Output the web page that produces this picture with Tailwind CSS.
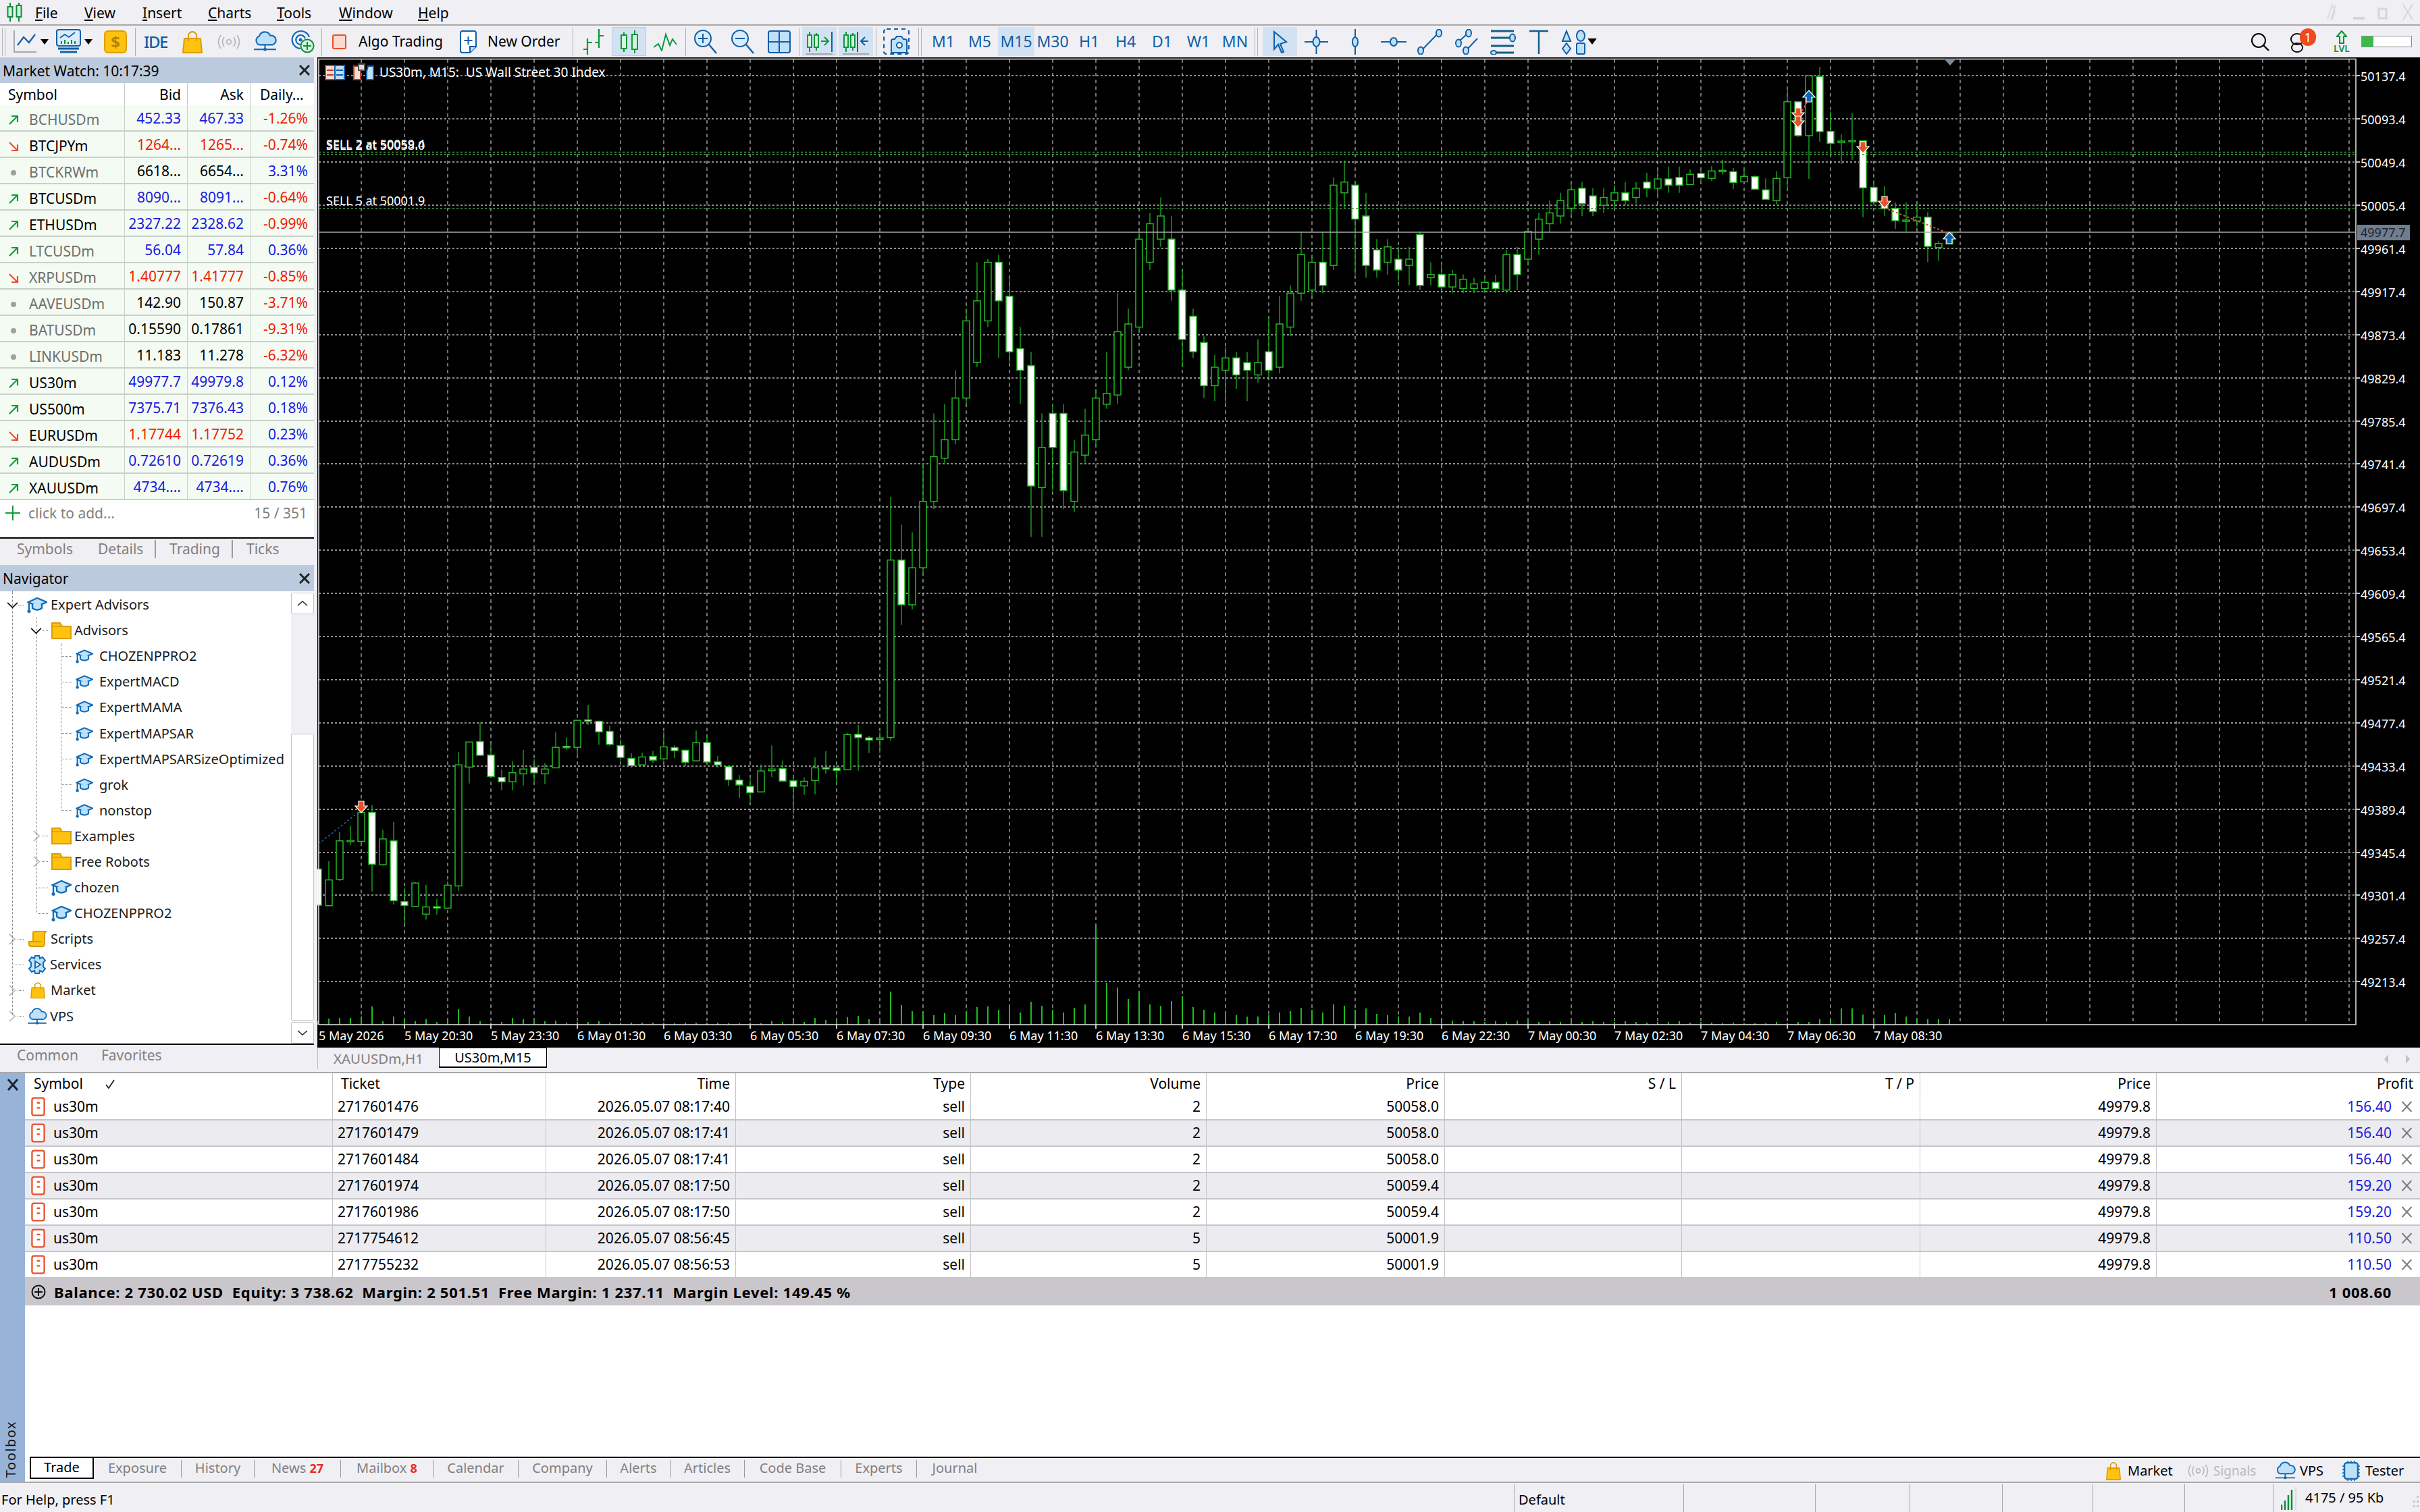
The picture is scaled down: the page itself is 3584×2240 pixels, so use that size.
<!DOCTYPE html>
<html lang="en">
<head>
<meta charset="UTF-8" />
<title>MetaTrader 5</title>
<script src="https://cdn.jsdelivr.net/npm/@tailwindcss/browser@4"></script>
</head>
<body class="w-[3584px] h-[2240px] overflow-hidden flex flex-col bg-[#f0eff3] text-[21px] text-black [font-family:'Noto_Sans',sans-serif]">

<svg class="absolute w-0 h-0">
  <defs>
    <symbol id="cap" viewBox="0 0 30 24"><path d="M2 8 15 2l14 6-14 6z" fill="#bfe0f9" stroke="#0f6cb8" stroke-width="2.400"/><path d="M8 11v6q7 5 14 0v-6" fill="#bfe0f9" stroke="#0f6cb8" stroke-width="2.400"/><path d="M3 9v12" stroke="#0f6cb8" stroke-width="2.400"/><circle cx="3" cy="21.500" r="2.500" fill="#0f6cb8"/></symbol>
    <symbol id="folder" viewBox="0 0 30 25"><path d="M1 24V1h12l3 5h13v18z" fill="#ffc20e" stroke="#dc9c00" stroke-width="2"/><path d="M1 6h15" stroke="#dc9c00" stroke-width="1.500"/></symbol>
    <symbol id="open" viewBox="0 0 18 12"><path d="M1 2l8 8 8-8" fill="none" stroke="#000" stroke-width="1.800"/></symbol>
    <symbol id="shut" viewBox="0 0 12 18"><path d="M1 1l9 8-9 8" fill="none" stroke="#b4b4b4" stroke-width="1.800"/></symbol>
    <symbol id="up" viewBox="0 0 16 16"><path d="M2 14 14 2M5 2h9v9" fill="none" stroke="#129a3e" stroke-width="2.200"/></symbol>
    <symbol id="down" viewBox="0 0 16 16"><path d="M2 2l12 12M14 5v9H5" fill="none" stroke="#e9503c" stroke-width="2.200"/></symbol>
    <symbol id="dot" viewBox="0 0 16 16"><circle cx="8" cy="8" r="4" fill="#a0a0a0"/></symbol>
    <symbol id="sell" viewBox="0 0 22 30"><rect x="1.500" y="1.500" width="19" height="27" rx="3" fill="#fff" stroke="#e8502a" stroke-width="2.400"/><path d="M9 9h5M9 17h5" stroke="#e8502a" stroke-width="2.400"/></symbol>
    <symbol id="cross" viewBox="0 0 16 16"><path d="M1.500 1 14.500 15M14.500 1 1.500 15" stroke="#808080" stroke-width="2"/></symbol>
    <symbol id="bag" viewBox="0 0 30 34"><path d="M3 12h24l2 21H1z" fill="#ffc20e" stroke="#dc9c00" stroke-width="2"/><path d="M9 16V6q6-8 12 0v10" fill="none" stroke="#dc9c00" stroke-width="2"/></symbol>
    <symbol id="cloud" viewBox="0 0 36 32"><path d="M9 21a7 7 0 0 1 0-13 9 9 0 0 1 17-1 7 7 0 0 1 3 14z" fill="#bfe0f9" stroke="#0f6cb8" stroke-width="2.200"/><path d="M18 21v7M1 28h34" stroke="#0f6cb8" stroke-width="2.200"/><circle cx="18" cy="28" r="2.500" fill="#0f6cb8"/></symbol>
    <symbol id="signal" viewBox="0 0 34 22"><circle cx="17" cy="11" r="3.400" fill="none" stroke="#b9b9b9" stroke-width="1.800"/><path d="M10 4q-5 7 0 14M24 4q5 7 0 14M5 1q-7 10 0 20M29 1q7 10 0 20" fill="none" stroke="#b9b9b9" stroke-width="1.800"/></symbol>
    <symbol id="tri" viewBox="0 0 12 8"><path d="M0 0h12L6 8z"/></symbol>
  </defs>
</svg>

<!-- menu -->
<div class="h-[38px] flex items-center border-b-2 border-[#a9a9a9] shrink-0 relative [&>span]:mt-[3px]">
  <svg class="ml-[10px] w-[23px] h-[28px]" viewBox="0 0 23 28"><path d="M5 0v28M18 0v28" stroke="#0a8f3c" stroke-width="2"/><rect x="1.500" y="6" width="7" height="15" fill="#d6f5dc" stroke="#0a8f3c" stroke-width="2"/><rect x="14.500" y="4" width="7" height="17" fill="#d6f5dc" stroke="#0a8f3c" stroke-width="2"/></svg>
  <span class="ml-[19px] w-[73px]"><u>F</u>ile</span>
  <span class="w-[86px]"><u>V</u>iew</span>
  <span class="w-[97px]"><u>I</u>nsert</span>
  <span class="w-[102px]"><u>C</u>harts</span>
  <span class="w-[92px]"><u>T</u>ools</span>
  <span class="w-[117px]"><u>W</u>indow</span>
  <span><u>H</u>elp</span>
  <svg class="ml-auto mr-[9px] w-[130px] h-[26px]" viewBox="0 0 130 26"><path d="M2 24 9 2l4 10-4 12M14 2 7 24" fill="none" stroke="#dcdcde" stroke-width="2"/><path d="M40 20h17v4H40z" fill="#d6d6d8"/><path d="M78 8h11v14H78z" fill="none" stroke="#d6d6d8" stroke-width="3"/><path d="M114 2l14 22M128 2l-14 22" stroke="#d6d6d8" stroke-width="2"/></svg>
</div>

<!-- toolbar -->
<div class="h-[47px] flex items-center shrink-0">
  <div class="ml-[3px] w-[5px] h-[42px] border-x border-[#b4b4b4]"></div>
  <svg class="ml-[12px] w-[35px] h-[33px]" viewBox="0 0 35 33"><path d="M1 0v32h33" fill="none" stroke="#a8a8a8" stroke-width="2"/><path d="M6 22 15 10l8 8 9-12" fill="none" stroke="#0f5fa8" stroke-width="2.200"/></svg>
  <svg class="ml-[5px] w-[12px] h-[8px]"><use href="#tri"/></svg>
  <svg class="ml-[11px] w-[37px] h-[37px]" viewBox="0 0 37 37"><rect x="1" y="1" width="35" height="24" rx="3" fill="#d8ecfb" stroke="#0f5fa8" stroke-width="2"/><path d="M6 13l7-5 6 4 9-7" fill="none" stroke="#0f5fa8" stroke-width="1.800"/><path d="M8 22v-4M13 22v-6M18 22v-3M23 22v-6M28 22v-4" stroke="#0a8f3c" stroke-width="2"/><path d="M3 29h31M6 34h25" stroke="#0f5fa8" stroke-width="3"/></svg>
  <svg class="ml-[5px] w-[12px] h-[8px]"><use href="#tri"/></svg>
  <div class="ml-[17px] w-[34px] h-[34px] rounded-[6px] bg-[#ffc20e] border-2 border-[#e09e00] text-center text-[#b8820a] font-bold text-[24px] leading-[30px]">$</div>
  <div class="ml-[12px] w-px h-[42px] bg-[#b0b0b0]"></div>
  <div class="ml-[12px] w-[35px] text-[#0f5fa8] font-medium text-[24px] tracking-[-1.500px]">IDE</div>
  <svg class="ml-[22px] w-[30px] h-[34px]"><use href="#bag"/></svg>
  <svg class="ml-[22px] w-[34px] h-[22px]"><use href="#signal"/></svg>
  <svg class="ml-[19px] w-[35px] h-[31px]"><use href="#cloud"/></svg>
  <svg class="ml-[20px] w-[36px] h-[35px]" viewBox="0 0 36 35"><path d="M15 28a13 13 0 1 1 13-17M15 22a7 7 0 1 1 7-9" fill="none" stroke="#0f6cb8" stroke-width="2.200"/><circle cx="15" cy="15" r="2.500" fill="#0f6cb8"/><circle cx="25" cy="24" r="9.500" fill="#d6f5dc" stroke="#0a8f3c" stroke-width="2"/><path d="M25 18v12M19 24h12" stroke="#0a8f3c" stroke-width="2"/></svg>
  <div class="ml-[10px] w-px h-[42px] bg-[#b0b0b0]"></div>
  <div class="ml-[15px] w-[21px] h-[22px] rounded-[3px] bg-[#fbd9cf] border-2 border-[#e8502a]"></div>
  <span class="ml-[18px] w-[123px] whitespace-nowrap">Algo Trading</span>
  <svg class="ml-[27px] w-[25px] h-[34px]" viewBox="0 0 25 34"><path d="M4 1h17q3 0 3 3v20l-9 9H4q-3 0-3-3V4q0-3 3-3z" fill="#fff" stroke="#0f5fa8" stroke-width="2"/><path d="M12.500 9v12M6.500 15h12" stroke="#0f5fa8" stroke-width="2"/><path d="M15 33v-9h9" fill="#bfe0f9" stroke="#0f5fa8" stroke-width="2"/></svg>
  <span class="ml-[16px] w-[106px] whitespace-nowrap">New Order</span>
  <div class="ml-[20px] w-px h-[42px] bg-[#b0b0b0]"></div>
  <svg class="ml-[12px] w-[34px] h-[38px]" viewBox="0 0 34 38"><path d="M9 14v24M3 30h6M9 20h7M26 0v28M20 20h6M26 10h7" fill="none" stroke="#0a9a3c" stroke-width="2.200"/></svg>
  <div class="ml-[11px] w-[51px] h-[43px] flex items-center justify-center bg-[#d3e2f2] border border-[#bccde0]">
    <svg class="w-[28px] h-[34px]" viewBox="0 0 28 34"><path d="M6 3v29M22 0v34" stroke="#0a9a3c" stroke-width="2"/><rect x="2" y="7" width="8" height="20" fill="#d6f5dc" stroke="#0a9a3c" stroke-width="2"/><rect x="18" y="6" width="8" height="22" fill="#d6f5dc" stroke="#0a9a3c" stroke-width="2"/></svg>
  </div>
  <svg class="ml-[11px] w-[35px] h-[28px]" viewBox="0 0 35 28"><path d="M0 22l7-5 5 10 6-24 6 16 4-9 6 8" fill="none" stroke="#0a9a3c" stroke-width="2"/></svg>
  <div class="ml-[12px] w-px h-[42px] bg-[#b0b0b0]"></div>
  <svg class="ml-[12px] w-[34px] h-[36px]" viewBox="0 0 34 36"><circle cx="13" cy="13" r="12" fill="#d8ecfb" stroke="#0f5fa8" stroke-width="2"/><path d="M13 6v14M6 13h14" stroke="#0f5fa8" stroke-width="2"/><path d="M22 22l11 13" stroke="#0f5fa8" stroke-width="2.400"/></svg>
  <svg class="ml-[21px] w-[34px] h-[36px]" viewBox="0 0 34 36"><circle cx="13" cy="13" r="12" fill="#d8ecfb" stroke="#0f5fa8" stroke-width="2"/><path d="M6 13h14" stroke="#0f5fa8" stroke-width="2"/><path d="M22 22l11 13" stroke="#0f5fa8" stroke-width="2.400"/></svg>
  <svg class="ml-[20px] w-[34px] h-[34px]" viewBox="0 0 34 34"><rect x="1" y="1" width="32" height="32" rx="3" fill="#bfe0f9" stroke="#0f5fa8" stroke-width="2"/><path d="M17 1v32M1 17h32" stroke="#0f5fa8" stroke-width="2"/></svg>
  <div class="ml-[12px] w-px h-[42px] bg-[#b0b0b0]"></div>
  <div class="ml-[4px] w-[51px] h-[43px] flex items-center justify-center bg-[#d3e2f2] relative">
    <svg class="w-[38px] h-[30px]" viewBox="0 0 38 30"><path d="M4 0v30M14 2v26" stroke="#0a9a3c" stroke-width="2"/><rect x="1" y="5" width="6" height="18" fill="#d6f5dc" stroke="#0a9a3c" stroke-width="2"/><rect x="11" y="5" width="6" height="18" fill="#d6f5dc" stroke="#0a9a3c" stroke-width="2"/><path d="M21 14h10M26 8l6 6-6 6" fill="none" stroke="#0a9a3c" stroke-width="2"/><path d="M37 0v30" stroke="#0f5fa8" stroke-width="2"/></svg>
    <div class="absolute left-[6px] right-[6px] bottom-[2px] h-[2px] bg-[#a4a8ae]"></div>
  </div>
  <div class="ml-[3px] w-[51px] h-[43px] flex items-center justify-center bg-[#d3e2f2] relative">
    <svg class="w-[38px] h-[30px]" viewBox="0 0 38 30"><path d="M4 0v30M14 2v26" stroke="#0a9a3c" stroke-width="2"/><rect x="1" y="5" width="6" height="18" fill="#d6f5dc" stroke="#0a9a3c" stroke-width="2"/><rect x="11" y="5" width="6" height="18" fill="#d6f5dc" stroke="#0a9a3c" stroke-width="2"/><path d="M21 0v30" stroke="#0f5fa8" stroke-width="2"/><path d="M37 14H27M32 8l-6 6 6 6" fill="none" stroke="#0f5fa8" stroke-width="2"/></svg>
    <div class="absolute left-[6px] right-[6px] bottom-[2px] h-[2px] bg-[#a4a8ae]"></div>
  </div>
  <div class="ml-[4px] w-px h-[42px] bg-[#b0b0b0]"></div>
  <svg class="ml-[10px] w-[39px] h-[39px]" viewBox="0 0 39 39"><rect x="1" y="1" width="37" height="37" rx="4" fill="none" stroke="#0f5fa8" stroke-width="2.200" stroke-dasharray="6 5"/><path d="M12 36V19q0-3 3-3h2l3-4h7l3 4h2q3 0 3 3v17z" fill="#bfe0f9" stroke="#0f5fa8" stroke-width="2"/><circle cx="24" cy="25" r="4" fill="#fff" stroke="#0f5fa8" stroke-width="2"/></svg>
  <div class="ml-[13px] w-[5px] h-[42px] border-x border-[#b4b4b4]"></div>
  <div class="ml-[5px] flex text-[#0f5fa8] text-[23px] text-center leading-[43px] [&>span]:w-[54px]">
    <span>M1</span><span>M5</span><span class="bg-[#d3e2f2]">M15</span><span>M30</span><span>H1</span><span>H4</span><span>D1</span><span>W1</span><span>MN</span>
  </div>
  <div class="ml-[2px] w-[5px] h-[42px] border-x border-[#b4b4b4]"></div>
  <div class="ml-[7px] w-[51px] h-[43px] flex items-center justify-center bg-[#d3e2f2]">
    <svg class="w-[22px] h-[34px]" viewBox="0 0 22 34"><path d="M2 2l18 15-9 3 5 12-3 1-5-12-6 7z" fill="#bfe0f9" stroke="#0f5fa8" stroke-width="2"/></svg>
  </div>
  <svg class="ml-[11px] w-[35px] h-[36px]" viewBox="0 0 35 36"><path d="M17.500 0v36M0 18h35" stroke="#0f5fa8" stroke-width="2"/><ellipse cx="17.500" cy="18" rx="5" ry="7" fill="#bfe0f9" stroke="#0f5fa8" stroke-width="2"/></svg>
  <svg class="ml-[34px] w-[12px] h-[38px]" viewBox="0 0 12 38"><path d="M6 0v38" stroke="#0f5fa8" stroke-width="2"/><ellipse cx="6" cy="19" rx="4" ry="7" fill="#bfe0f9" stroke="#0f5fa8" stroke-width="2"/></svg>
  <svg class="ml-[32px] w-[38px] h-[14px]" viewBox="0 0 38 14"><path d="M0 7h38" stroke="#0f5fa8" stroke-width="2"/><ellipse cx="19" cy="7" rx="5" ry="6" fill="#bfe0f9" stroke="#0f5fa8" stroke-width="2"/></svg>
  <svg class="ml-[16px] w-[37px] h-[38px]" viewBox="0 0 37 38"><path d="M6 32 31 6" stroke="#0f5fa8" stroke-width="2"/><ellipse cx="5" cy="32" rx="4" ry="5.500" fill="#bfe0f9" stroke="#0f5fa8" stroke-width="2"/><ellipse cx="32" cy="6" rx="4" ry="5.500" fill="#bfe0f9" stroke="#0f5fa8" stroke-width="2"/></svg>
  <svg class="ml-[19px] w-[37px] h-[38px]" viewBox="0 0 37 38"><path d="M4 20 19 6M16 32 33 14" stroke="#0f5fa8" stroke-width="2"/><ellipse cx="5" cy="21" rx="4" ry="5.500" fill="#bfe0f9" stroke="#0f5fa8" stroke-width="2"/><ellipse cx="20" cy="6" rx="4" ry="5.500" fill="#bfe0f9" stroke="#0f5fa8" stroke-width="2"/><ellipse cx="16" cy="32" rx="4" ry="5.500" fill="#bfe0f9" stroke="#0f5fa8" stroke-width="2"/></svg>
  <svg class="ml-[14px] w-[40px] h-[38px]" viewBox="0 0 40 38"><path d="M2 3h34M2 13h34M2 25h34M2 35h34" stroke="#0f6088" stroke-width="3" /><ellipse cx="34" cy="13" rx="4" ry="5.500" fill="#bfe0f9" stroke="#0f5fa8" stroke-width="2"/><ellipse cx="6" cy="35" rx="4" ry="3" fill="#bfe0f9" stroke="#0f5fa8" stroke-width="2"/></svg>
  <svg class="ml-[19px] w-[28px] h-[36px]" viewBox="0 0 28 36"><path d="M0 2h28M14 2v34" stroke="#0f6088" stroke-width="2.400"/></svg>
  <svg class="ml-[20px] w-[36px] h-[38px]" viewBox="0 0 36 38"><path d="M7 3l6 15H1z" fill="#bfe0f9" stroke="#0f5fa8" stroke-width="2"/><ellipse cx="28" cy="10" rx="6" ry="8" fill="#bfe0f9" stroke="#0f5fa8" stroke-width="2"/><path d="M7 21l6 8-6 8-6-8z" fill="#bfe0f9" stroke="#0f5fa8" stroke-width="2"/><rect x="22" y="21" width="12" height="16" rx="2" fill="#bfe0f9" stroke="#0f5fa8" stroke-width="2"/></svg>
  <svg class="ml-[2px] w-[14px] h-[9px]"><use href="#tri"/></svg>

  <svg class="ml-auto w-[27px] h-[26px]" viewBox="0 0 27 26"><ellipse cx="11" cy="11" rx="10" ry="10" fill="none" stroke="#000" stroke-width="2"/><path d="M18 18l8 8" stroke="#000" stroke-width="2.400"/></svg>
  <div class="ml-[27px] w-[42px] h-[32px] relative">
    <svg class="w-[28px] h-[30px] mt-[2px]" viewBox="0 0 28 30"><path d="M14 2a9 8 0 1 0 .1 0M14 16a8 6.500 0 1 0 .1 0" fill="none" stroke="#111" stroke-width="2"/></svg>
    <div class="absolute right-0 -top-[4px] w-[24px] h-[26px] rounded-full bg-[#ef4a1f] text-white text-[18px] text-center leading-[26px]">1</div>
  </div>
  <div class="ml-[25px] w-[26px] flex flex-col items-center">
    <svg class="w-[16px] h-[20px]" viewBox="0 0 16 20"><path d="M8 1 1 9h4v10h6V9h4z" fill="#d6f5dc" stroke="#0a8f3c" stroke-width="2"/></svg>
    <span class="text-[#0a8f3c] text-[14px] leading-[13px] font-semibold">LVL</span>
  </div>
  <div class="ml-[16px] mr-[12px] w-[75px] h-[17px] border border-[#8e8e8e] bg-white"><div class="w-[17px] h-full bg-[#3cb94a]"></div></div>
</div>

<!-- main -->
<div class="h-[1503px] flex shrink-0">
  <div class="w-[470px] shrink-0">
    <div class="w-[465px]">
      <div class="h-[38px] bg-[#bccadd] flex items-center justify-between px-[4px]">
        <span class="mt-[4px]">Market Watch: 10:17:39</span>
        <svg class="mr-[2px] w-[16px] h-[16px]" viewBox="0 0 16 16"><path d="M1 1l14 14M15 1 1 15" stroke="#222" stroke-width="3"/></svg>
      </div>
      <div class="h-[33px] bg-white grid grid-cols-[185px_93px_93px_94px] leading-[35px] [&>span]:border-r [&>span]:border-[#c8c8c8] [&>span]:text-right [&>span]:pr-[9px]">
        <span class="!text-left pl-[12px]">Symbol</span><span>Bid</span><span>Ask</span><span class="!border-0 !pr-0 !text-left pl-[14px] whitespace-nowrap">Daily...</span>
      </div>
      <div class="[&>div]:grid [&>div]:grid-cols-[185px_93px_93px_94px] [&>div]:h-[39px] [&>div]:bg-[#f3fbf3] [&>div]:border-b-2 [&>div]:border-[#c9d0c9] [&>div]:leading-[39px] [&>div>span]:border-r [&>div>span]:border-[#c9d0c9] [&>div>span]:text-right [&>div>span]:pr-[9px] [&>div>span]:whitespace-nowrap [&>div>p]:flex [&>div>p]:items-center [&>div>p]:gap-[15px] [&>div>p]:pl-[12px] [&>div>p]:pt-[2px] [&>div>p]:border-r [&>div>p]:border-[#c9d0c9]">
        <div><p class="text-[#6f6f6f]"><svg class="w-[16px] h-[16px]"><use href="#up"/></svg>BCHUSDm</p><span class="text-[#1b1be0]">452.33</span><span class="text-[#1b1be0]">467.33</span><span class="text-[#f02000] !border-0">-1.26%</span></div>
        <div><p><svg class="w-[16px] h-[16px]"><use href="#down"/></svg>BTCJPYm</p><span class="text-[#f02000]">1264...</span><span class="text-[#f02000]">1265...</span><span class="text-[#f02000] !border-0">-0.74%</span></div>
        <div><p class="text-[#6f6f6f]"><svg class="w-[16px] h-[16px]"><use href="#dot"/></svg>BTCKRWm</p><span>6618...</span><span>6654...</span><span class="text-[#1b1be0] !border-0">3.31%</span></div>
        <div><p><svg class="w-[16px] h-[16px]"><use href="#up"/></svg>BTCUSDm</p><span class="text-[#1b1be0]">8090...</span><span class="text-[#1b1be0]">8091...</span><span class="text-[#f02000] !border-0">-0.64%</span></div>
        <div><p><svg class="w-[16px] h-[16px]"><use href="#up"/></svg>ETHUSDm</p><span class="text-[#1b1be0]">2327.22</span><span class="text-[#1b1be0]">2328.62</span><span class="text-[#f02000] !border-0">-0.99%</span></div>
        <div><p class="text-[#6f6f6f]"><svg class="w-[16px] h-[16px]"><use href="#up"/></svg>LTCUSDm</p><span class="text-[#1b1be0]">56.04</span><span class="text-[#1b1be0]">57.84</span><span class="text-[#1b1be0] !border-0">0.36%</span></div>
        <div><p class="text-[#6f6f6f]"><svg class="w-[16px] h-[16px]"><use href="#down"/></svg>XRPUSDm</p><span class="text-[#f02000]">1.40777</span><span class="text-[#f02000]">1.41777</span><span class="text-[#f02000] !border-0">-0.85%</span></div>
        <div><p class="text-[#6f6f6f]"><svg class="w-[16px] h-[16px]"><use href="#dot"/></svg>AAVEUSDm</p><span>142.90</span><span>150.87</span><span class="text-[#f02000] !border-0">-3.71%</span></div>
        <div><p class="text-[#6f6f6f]"><svg class="w-[16px] h-[16px]"><use href="#dot"/></svg>BATUSDm</p><span>0.15590</span><span>0.17861</span><span class="text-[#f02000] !border-0">-9.31%</span></div>
        <div><p class="text-[#6f6f6f]"><svg class="w-[16px] h-[16px]"><use href="#dot"/></svg>LINKUSDm</p><span>11.183</span><span>11.278</span><span class="text-[#f02000] !border-0">-6.32%</span></div>
        <div><p><svg class="w-[16px] h-[16px]"><use href="#up"/></svg>US30m</p><span class="text-[#1b1be0]">49977.7</span><span class="text-[#1b1be0]">49979.8</span><span class="text-[#1b1be0] !border-0">0.12%</span></div>
        <div><p><svg class="w-[16px] h-[16px]"><use href="#up"/></svg>US500m</p><span class="text-[#1b1be0]">7375.71</span><span class="text-[#1b1be0]">7376.43</span><span class="text-[#1b1be0] !border-0">0.18%</span></div>
        <div><p><svg class="w-[16px] h-[16px]"><use href="#down"/></svg>EURUSDm</p><span class="text-[#f02000]">1.17744</span><span class="text-[#f02000]">1.17752</span><span class="text-[#1b1be0] !border-0">0.23%</span></div>
        <div><p><svg class="w-[16px] h-[16px]"><use href="#up"/></svg>AUDUSDm</p><span class="text-[#1b1be0]">0.72610</span><span class="text-[#1b1be0]">0.72619</span><span class="text-[#1b1be0] !border-0">0.36%</span></div>
        <div><p><svg class="w-[16px] h-[16px]"><use href="#up"/></svg>XAUUSDm</p><span class="text-[#1b1be0]">4734....</span><span class="text-[#1b1be0]">4734....</span><span class="text-[#1b1be0] !border-0">0.76%</span></div>
      </div>
      <div class="h-[55px] bg-white flex items-start pt-[4px] text-[#808080] relative leading-[30px]">
        <svg class="ml-[8px] mt-[4px] w-[22px] h-[22px]" viewBox="0 0 22 22"><path d="M11 0v22M0 11h22" stroke="#129a3e" stroke-width="2"/></svg>
        <span class="ml-[12px]">click to add...</span>
        <span class="ml-auto mr-[10px]">15 / 351</span>
      </div>
      <div class="h-[41px] border-t-2 border-black flex items-center pb-[8px] text-[#808080] [&>span]:h-[27px] [&>span]:leading-[27px]">
        <span class="ml-[25px] w-[120px]">Symbols</span>
        <span class="w-[86px] border-r-2 border-[#9c9c9c]">Details</span>
        <span class="pl-[20px] w-[114px] border-r-2 border-[#9c9c9c]">Trading</span>
        <span class="pl-[20px]">Ticks</span>
      </div>
      <div class="h-[39px] bg-[#bccadd] flex items-center justify-between px-[4px]">
        <span class="mt-[2px]">Navigator</span>
        <svg class="mr-[2px] w-[16px] h-[16px]" viewBox="0 0 16 16"><path d="M1 1l14 14M15 1 1 15" stroke="#222" stroke-width="3"/></svg>
      </div>
      <div class="h-[670px] bg-white flex relative text-[20px] text-[#1a1a1a]">
        <div class="absolute left-[18px] top-0 h-[628px] border-l border-dotted border-[#777]"></div>
        <div class="absolute left-[54px] top-[39px] h-[438px] border-l border-dotted border-[#777]"></div>
        <div class="absolute left-[90px] top-[77px] h-[248px] border-l border-dotted border-[#777]"></div>
        <div class="w-[431px] pt-px [&>div]:h-[38.1px] [&>div]:flex [&>div]:items-center [&>div]:whitespace-nowrap [&>div>i]:border-t [&>div>i]:border-dotted [&>div>i]:border-[#777]">
          <div class="relative pl-[10px]"><svg class="w-[17px] h-[11px]"><use href="#open"/></svg><i class="w-[8px]"></i><svg class="ml-[5px] w-[30px] h-[24px]"><use href="#cap"/></svg><span class="ml-[5px]">Expert Advisors</span></div>
          <div class="relative pl-[45px]"><svg class="w-[17px] h-[11px]"><use href="#open"/></svg><i class="w-[9px]"></i><svg class="ml-[5px] w-[30px] h-[25px]"><use href="#folder"/></svg><span class="ml-[4px]">Advisors</span></div>
          <div class="pl-[92px]"><i class="w-[15px]"></i><svg class="ml-[5px] w-[26px] h-[22px]"><use href="#cap"/></svg><span class="ml-[9px]">CHOZENPPRO2</span></div>
          <div class="pl-[92px]"><i class="w-[15px]"></i><svg class="ml-[5px] w-[26px] h-[22px]"><use href="#cap"/></svg><span class="ml-[9px]">ExpertMACD</span></div>
          <div class="pl-[92px]"><i class="w-[15px]"></i><svg class="ml-[5px] w-[26px] h-[22px]"><use href="#cap"/></svg><span class="ml-[9px]">ExpertMAMA</span></div>
          <div class="pl-[92px]"><i class="w-[15px]"></i><svg class="ml-[5px] w-[26px] h-[22px]"><use href="#cap"/></svg><span class="ml-[9px]">ExpertMAPSAR</span></div>
          <div class="pl-[92px]"><i class="w-[15px]"></i><svg class="ml-[5px] w-[26px] h-[22px]"><use href="#cap"/></svg><span class="ml-[9px]">ExpertMAPSARSizeOptimized</span></div>
          <div class="pl-[92px]"><i class="w-[15px]"></i><svg class="ml-[5px] w-[26px] h-[22px]"><use href="#cap"/></svg><span class="ml-[9px]">grok</span></div>
          <div class="pl-[92px]"><i class="w-[15px]"></i><svg class="ml-[5px] w-[26px] h-[22px]"><use href="#cap"/></svg><span class="ml-[9px]">nonstop</span></div>
          <div class="pl-[49px]"><svg class="w-[11px] h-[17px]"><use href="#shut"/></svg><i class="ml-[2px] w-[9px]"></i><svg class="ml-[5px] w-[30px] h-[25px]"><use href="#folder"/></svg><span class="ml-[4px]">Examples</span></div>
          <div class="pl-[49px]"><svg class="w-[11px] h-[17px]"><use href="#shut"/></svg><i class="ml-[2px] w-[9px]"></i><svg class="ml-[5px] w-[30px] h-[25px]"><use href="#folder"/></svg><span class="ml-[4px]">Free Robots</span></div>
          <div class="pl-[56px]"><i class="w-[15px]"></i><svg class="ml-[5px] w-[30px] h-[24px]"><use href="#cap"/></svg><span class="ml-[4px]">chozen</span></div>
          <div class="pl-[56px]"><i class="w-[15px]"></i><svg class="ml-[5px] w-[30px] h-[24px]"><use href="#cap"/></svg><span class="ml-[4px]">CHOZENPPRO2</span></div>
          <div class="pl-[13px]"><svg class="w-[11px] h-[17px]"><use href="#shut"/></svg><i class="ml-[2px] w-[9px]"></i><svg class="ml-[7px] w-[28px] h-[24px]" viewBox="0 0 28 24"><path d="M7 16V3q0-2 2-2h17q-2 2-2 4v14q0 4-4 4H4q-3 0-3-3v-4h19" fill="#ffc20e" stroke="#dc9c00" stroke-width="2"/></svg><span class="ml-[5px]">Scripts</span></div>
          <div class="pl-[20px]"><i class="w-[15px]"></i><svg class="ml-[6px] w-[28px] h-[28px]" viewBox="0 0 28 28"><path d="M11 1h6l1 4 4-2 4 5-3 3v6l3 3-4 5-4-2-1 4h-6l-1-4-4 2-4-5 3-3v-6L2 8l4-5 4 2z" fill="#bfe0f9" stroke="#0f6cb8" stroke-width="2"/><path d="M11 9l8 5-8 5z" fill="#fff" stroke="#0f6cb8" stroke-width="2"/></svg><span class="ml-[5px]">Services</span></div>
          <div class="pl-[13px]"><svg class="w-[11px] h-[17px]"><use href="#shut"/></svg><i class="ml-[2px] w-[9px]"></i><svg class="ml-[10px] w-[22px] h-[26px]" viewBox="0 0 30 34"><use href="#bag"/></svg><span class="ml-[8px]">Market</span></div>
          <div class="pl-[13px]"><svg class="w-[11px] h-[17px]"><use href="#shut"/></svg><i class="ml-[2px] w-[9px]"></i><svg class="ml-[5px] w-[30px] h-[26px]"><use href="#cloud"/></svg><span class="ml-[4px]">VPS</span></div>
        </div>
        <div class="w-[34px] flex flex-col">
          <div class="mt-[2px] h-[32px] bg-white border border-[#c4c4c4] rounded-[2px] flex items-center justify-center"><svg class="w-[16px] h-[8px]" viewBox="0 0 16 8"><path d="M1 7l7-6 7 6" fill="none" stroke="#222" stroke-width="1.500"/></svg></div>
          <div class="h-[177px] bg-[#f0eff3]"></div>
          <div class="h-[426px] bg-white border border-[#c4c4c4] rounded-[2px]"></div>
          <div class="mt-[2px] h-[32px] bg-white border border-[#c4c4c4] rounded-[2px] flex items-center justify-center"><svg class="w-[16px] h-[8px]" viewBox="0 0 16 8"><path d="M1 1l7 6 7-6" fill="none" stroke="#222" stroke-width="1.500"/></svg></div>
        </div>
      </div>
      <div class="h-[42px] border-t-2 border-black flex items-center text-[#808080] pb-[8px]">
        <span class="ml-[25px]">Common</span><span class="ml-[34px]">Favorites</span>
      </div>
    </div>
  </div>

  <div class="flex-1 flex flex-col">
    <div class="h-[1467px] bg-black relative">
      <svg id="chart" class="absolute inset-0" width="3114" height="1467" viewBox="470 85 3114 1467" font-size="18" fill="#fff"></svg>
    </div>
    <div class="h-[36px] flex items-start">
      <div class="h-[32px] w-[180px] border-l border-[#bdbdbd] pl-[23px] text-[#808080] leading-[32px] text-[20.500px]">XAUUSDm,H1</div>
      <div class="h-[30px] w-[160px] bg-white border border-black border-b-2 text-center leading-[28px] text-[20px]">US30m,M15</div>
      <svg class="ml-auto mr-[14px] mt-[10px] w-[40px] h-[14px]" viewBox="0 0 40 14"><path d="M7 0v14L1 7zM33 0v14l6-7z" fill="#c4c4c6"/></svg>
    </div>
  </div>
</div>

<!-- toolbox -->
<div class="h-[609px] flex border-t-2 border-b-2 border-[#a9a9a9] shrink-0">
  <div class="w-[37px] bg-[#97b4d8] flex flex-col items-center justify-between shrink-0">
    <svg class="mt-[8px] w-[18px] h-[18px]" viewBox="0 0 18 18"><path d="M2 1l14 16M16 1 2 17" stroke="#1c2430" stroke-width="3"/></svg>
    <span class="[writing-mode:vertical-rl] rotate-180 mb-[6px] tracking-[1.500px] text-[20px] mr-[6px] text-[#10151c]">Toolbox</span>
  </div>
  <div class="flex-1 flex flex-col bg-white">
    <div class="flex-1">
      <div class="h-[31px] grid grid-cols-[456px_316px_281px_348px_349px_353px_351px_353px_350px_390px] leading-[31px] [&>span]:border-r [&>span]:border-[#c4c4c4] [&>span]:text-right [&>span]:pr-[8px]">
        <span class="!text-left pl-[13px] flex items-center gap-[32px]">Symbol <svg class="w-[16px] h-[14px]" viewBox="0 0 16 14"><path d="M2 8l4 5 8-12" fill="none" stroke="#222" stroke-width="1.800"/></svg></span><span class="!text-left pl-[12px]">Ticket</span><span>Time</span><span>Type</span><span>Volume</span><span>Price</span><span>S / L</span><span>T / P</span><span>Price</span><span class="!border-0 !pr-[10px]">Profit</span>
      </div>
      <div class="[&>div]:grid [&>div]:grid-cols-[456px_316px_281px_348px_349px_353px_351px_353px_350px_390px] [&>div]:h-[39px] [&>div]:border-b-2 [&>div]:border-[#c6c6ca] [&>div]:leading-[37px] [&>div:nth-child(even)]:bg-[#ecebef] [&>div>span]:border-r [&>div>span]:border-[#c6c6ca] [&>div>span]:text-right [&>div>span]:pr-[8px] [&>div>p]:flex [&>div>p]:items-center [&>div>p]:gap-[12px] [&>div>p]:pl-[9px] [&>div>p]:border-r [&>div>p]:border-[#c6c6ca]">
        <div><p><svg class="w-[21px] h-[29px]"><use href="#sell"/></svg>us30m</p><span class="!text-left !pl-[7px]">2717601476</span><span>2026.05.07 08:17:40</span><span>sell</span><span>2</span><span>50058.0</span><span></span><span></span><span>49979.8</span><span class="!border-0 !pr-0 flex items-center justify-end text-[#1b1be0]">156.40<svg class="ml-[14px] mr-[11px] w-[17px] h-[17px]"><use href="#cross"/></svg></span></div>
        <div><p><svg class="w-[21px] h-[29px]"><use href="#sell"/></svg>us30m</p><span class="!text-left !pl-[7px]">2717601479</span><span>2026.05.07 08:17:41</span><span>sell</span><span>2</span><span>50058.0</span><span></span><span></span><span>49979.8</span><span class="!border-0 !pr-0 flex items-center justify-end text-[#1b1be0]">156.40<svg class="ml-[14px] mr-[11px] w-[17px] h-[17px]"><use href="#cross"/></svg></span></div>
        <div><p><svg class="w-[21px] h-[29px]"><use href="#sell"/></svg>us30m</p><span class="!text-left !pl-[7px]">2717601484</span><span>2026.05.07 08:17:41</span><span>sell</span><span>2</span><span>50058.0</span><span></span><span></span><span>49979.8</span><span class="!border-0 !pr-0 flex items-center justify-end text-[#1b1be0]">156.40<svg class="ml-[14px] mr-[11px] w-[17px] h-[17px]"><use href="#cross"/></svg></span></div>
        <div><p><svg class="w-[21px] h-[29px]"><use href="#sell"/></svg>us30m</p><span class="!text-left !pl-[7px]">2717601974</span><span>2026.05.07 08:17:50</span><span>sell</span><span>2</span><span>50059.4</span><span></span><span></span><span>49979.8</span><span class="!border-0 !pr-0 flex items-center justify-end text-[#1b1be0]">159.20<svg class="ml-[14px] mr-[11px] w-[17px] h-[17px]"><use href="#cross"/></svg></span></div>
        <div><p><svg class="w-[21px] h-[29px]"><use href="#sell"/></svg>us30m</p><span class="!text-left !pl-[7px]">2717601986</span><span>2026.05.07 08:17:50</span><span>sell</span><span>2</span><span>50059.4</span><span></span><span></span><span>49979.8</span><span class="!border-0 !pr-0 flex items-center justify-end text-[#1b1be0]">159.20<svg class="ml-[14px] mr-[11px] w-[17px] h-[17px]"><use href="#cross"/></svg></span></div>
        <div><p><svg class="w-[21px] h-[29px]"><use href="#sell"/></svg>us30m</p><span class="!text-left !pl-[7px]">2717754612</span><span>2026.05.07 08:56:45</span><span>sell</span><span>5</span><span>50001.9</span><span></span><span></span><span>49979.8</span><span class="!border-0 !pr-0 flex items-center justify-end text-[#1b1be0]">110.50<svg class="ml-[14px] mr-[11px] w-[17px] h-[17px]"><use href="#cross"/></svg></span></div>
        <div><p><svg class="w-[21px] h-[29px]"><use href="#sell"/></svg>us30m</p><span class="!text-left !pl-[7px]">2717755232</span><span>2026.05.07 08:56:53</span><span>sell</span><span>5</span><span>50001.9</span><span></span><span></span><span>49979.8</span><span class="!border-0 !pr-0 flex items-center justify-end text-[#1b1be0]">110.50<svg class="ml-[14px] mr-[11px] w-[17px] h-[17px]"><use href="#cross"/></svg></span></div>
      </div>
      <div class="h-[40px] bg-[#c9c7cc] flex items-center font-bold text-[22px] tracking-[0.700px]">
        <svg class="ml-[9px] w-[22px] h-[22px]" viewBox="0 0 22 22"><circle cx="11" cy="11" r="9.500" fill="none" stroke="#111" stroke-width="2"/><path d="M11 5v12M5 11h12" stroke="#111" stroke-width="2"/></svg>
        <span class="ml-[12px] whitespace-pre">Balance: 2 730.02 USD  Equity: 3 738.62  Margin: 2 501.51  Free Margin: 1 237.11  Margin Level: 149.45 %</span>
        <span class="ml-auto mr-[42px]">1 008.60</span>
      </div>
    </div>
    <div class="h-[37px] border-t-2 border-black bg-[#f0eff3] flex items-start text-[20px] text-[#808080] ml-[7px] [&>span]:mt-[3px] [&>span]:h-[26px] [&>span]:leading-[24px] [&>span]:text-center [&>span]:border-r [&>span]:border-[#9a9a9a] [&>span]:whitespace-nowrap">
      <div class="w-[95px] h-[31px] bg-white border-x-2 border-b-2 border-black text-black text-center leading-[28px]">Trade</div>
      <span class="w-[130px]">Exposure</span>
      <span class="w-[108px]">History</span>
      <span class="w-[128px]">News <b class="text-[#e8281e] text-[18px]">27</b></span>
      <span class="w-[137px]">Mailbox <b class="text-[#e8281e] text-[18px]">8</b></span>
      <span class="w-[126px]">Calendar</span>
      <span class="w-[131px]">Company</span>
      <span class="w-[94px]">Alerts</span>
      <span class="w-[110px]">Articles</span>
      <span class="w-[143px]">Code Base</span>
      <span class="w-[112px]">Experts</span>
      <span class="w-[112px] !border-0">Journal</span>
      <div class="ml-auto mt-[4px] w-[465px] flex items-center text-black whitespace-nowrap">
        <svg class="w-[22px] h-[28px]" viewBox="0 0 30 34" preserveAspectRatio="none"><use href="#bag"/></svg>
        <b class="ml-[10px] w-[68px] font-normal">Market</b>
        <svg class="ml-[21px] w-[31px] h-[20px]"><use href="#signal"/></svg>
        <i class="ml-[7px] w-[69px] not-italic text-[#b9b9b9] text-[19px]">Signals</i>
        <svg class="ml-[22px] w-[31px] h-[28px]"><use href="#cloud"/></svg>
        <b class="ml-[6px] w-[39px] font-normal">VPS</b>
        <svg class="ml-[24px] w-[26px] h-[30px]" viewBox="0 0 26 30"><rect x="3" y="3" width="20" height="24" rx="4" fill="#bfe0f9" stroke="#0f6cb8" stroke-width="2.500"/><path d="M0 8h3M0 13h3M0 18h3M0 23h3M23 8h3M23 13h3M23 18h3M23 23h3M8 0v3M13 0v3M18 0v3M8 27v3M13 27v3M18 27v3" stroke="#0f6cb8" stroke-width="1.500"/></svg>
        <b class="ml-[8px] font-normal">Tester</b>
      </div>
    </div>
  </div>
</div>

<!-- status -->
<div class="h-[43px] flex items-center text-[20px] flex-1 [&>div]:h-full [&>div]:border-r [&>div]:border-[#a8a8a8] [&>div]:leading-[46px] [&>div]:mt-[4px]">
  <div class="w-[2243px] pl-[2px]">For Help, press F1</div>
  <div class="w-[251px] pl-[6px]">Default</div>
  <div class="w-[195px]"></div>
  <div class="w-[140px]"></div>
  <div class="w-[137px]"></div>
  <div class="w-[134px]"></div>
  <div class="w-[136px]"></div>
  <div class="w-[131px]"></div>
  <div class="!border-0 flex-1 flex items-center">
    <svg class="ml-[11px] w-[28px] h-[36px] mt-[-4px]" viewBox="0 0 28 36"><path d="M1 36v-8M6 36V22M11 36V14M16 36V6" fill="none" stroke="#0a8f3c" stroke-width="2.500"/><path d="M22 36V2" stroke="#dedede" stroke-width="2.500"/></svg>
    <span class="ml-[8px] mt-[-4px] whitespace-nowrap">4175 / 95 Kb</span>
    <svg class="ml-auto mr-[2px] mt-[8px] w-[10px] h-[18px]" viewBox="0 0 10 18"><path d="M7 0h3v3H7zM7 7h3v3H7zM2 7h3v3H2zM7 14h3v3H7zM2 14h3v3H2z" fill="#c8c8c8"/></svg>
  </div>
</div>

<script>
  // chart drawn from pixel readings of the candles
  const svg = document.getElementById("chart");
  let out = "";
  const grid = "#bdbdbd";

  // grid
  for (let x = 535; x <= 3480; x += 64) {
    out += `<path d="M${x} 88V1518" stroke="${grid}" stroke-width="1.200" stroke-dasharray="5 5"/>`;
  }
  for (let i = 0; i < 22; i++) {
    const y = Math.round(112.3 + 63.9 * i);
    out += `<path d="M472 ${y}H3489" stroke="${grid}" stroke-width="1.500" stroke-dasharray="3 3"/>`;
    out += `<path d="M3489 ${y}h6" stroke="#fff" stroke-width="1.500"/>`;
    out += `<text x="3496" y="${y + 8}">${(50137.4 - 44 * i).toFixed(1)}</text>`;
  }

  // [type, bodyTop, bodyBottom, wickTop, wickBottom]; 1 = white body
  const first = [[1,805,955,805,955],[0,850,957,772,957],[0,688,848,650,855],[0,686,689,625,705],[0,570,690,555,710],[1,570,785,540,898],[0,680,787,642,790],[1,688,936,610,953],[1,940,956,885,1032],[0,863,960,858,962],[0,962,992,870,1015],[1,961,965,928,995],[0,872,967,855,970],[0,373,875,320,895],[0,278,382,278,450],[1,276,333,197,335],[1,332,421,283,425],[1,425,443,392,478],[0,405,443,357,478],[0,390,410,311,458],[1,383,406,350,442],[0,390,410,365,453],[0,300,385,238,385],[1,296,300,258,310],[0,188,300,188,340],[1,186,192,123,208],[1,192,236,190,290],[1,234,288,210,295],[1,293,342,267,355],[1,346,376,325,385],[0,340,373,322,375],[1,338,353,315,365],[0,298,348,235,355],[1,301,314,292,345],[1,312,362,312,378],[0,281,356,230,360],[1,280,361,250,362],[1,360,373,336,385],[1,380,435,378,460],[1,436,456,415,512],[1,462,488,430,525],[0,398,485,372,486],[0,390,397,292,423],[1,388,440,355,440],[1,439,463,425,576],[0,441,460,425,497],[0,385,438,342,495],[1,384,388,316,410],[1,386,396,375,458],[0,247,393,240,395],[1,246,260,207,397],[1,261,270,252,324],[0,261,267,235,324]];
  const mid = [[0,363,478,322,480],[1,363,392,340,405],[0,368,392,345,395],[0,325,368,300,372],[0,296,325,268,330],[0,285,297,262,300],[0,258,285,240,288],[0,208,258,200,262],[0,195,235,170,238],[0,170,208,168,212],[1,170,195,165,232],[1,192,228,180,235],[1,226,240,212,262],[1,237,315,228,348],[0,290,316,268,348],[1,268,290,262,318],[1,268,318,262,330],[0,293,325,285,332],[0,282,295,265,300],[0,258,285,252,290],[0,255,262,228,265],[0,215,256,190,262],[0,210,238,200,240],[0,155,212,150,215],[0,145,170,138,175],[0,140,155,128,160],[1,155,188,140,195],[1,188,220,175,238],[1,205,228,200,232],[1,222,250,218,258],[0,238,250,230,260],[0,232,240,225,262],[1,232,243,228,252],[1,235,240,228,260],[0,235,243,220,248],[1,228,240,205,245],[0,210,238,192,242],[0,190,212,185,218],[0,165,190,150,195],[0,170,188,165,192],[1,170,185,150,190],[0,120,172,115,175],[0,118,125,104,135],[1,120,142,118,178],[1,140,172,125,180],[1,162,175,155,180],[0,160,170,155,178],[1,168,175,160,182],[0,168,172,160,185],[1,152,185,150,188],[0,178,180,170,185],[1,178,186,172,190],[0,178,186,175,190],[0,181,187,178,190],[0,184,187,180,190],[0,183,187,180,190],[1,183,187,178,190],[0,165,188,162,190],[1,165,178,160,188],[0,150,168,148,172],[0,142,155,138,165],[0,138,145,130,150],[0,130,140,125,145],[0,123,135,118,140],[1,122,132,118,140],[1,127,137,122,140],[0,128,133,122,138],[0,125,130,120,135],[1,125,130,118,133],[0,122,128,118,132],[1,118,122,112,128],[0,116,122,110,128],[1,116,120,108,125],[1,115,120,108,125]];
  const last = [[0,535,580,513,582],[1,531,550,520,565],[0,520,553,497,565],[0,517,521,470,535],[1,523,571,507,600],[0,544,568,507,570],[1,545,601,540,603],[1,604,646,553,648],[0,553,652,520,668],[0,212,550,150,605],[1,212,363,210,368],[0,97,363,97,555],[1,100,345,57,390],[1,344,397,255,445],[0,387,394,358,488],[0,384,388,262,470],[1,386,595,385,725],[1,593,658,562,660],[1,658,688,588,720],[1,686,741,660,778],[0,738,742,660,788],[0,725,742,666,768],[1,725,855,703,925],[0,842,860,832,920],[0,796,844,796,846]];
  const vols = [5,9,10,10,12,27,5,12,8,5,8,4,6,23,12,5,3,4,10,8,5,5,6,3,4,4,5,3,3,3,3,3,3,2,3,3,3,3,2,2,3,2,5,4,8,4,10,7,5,11,13,8,5,
    49,29,20,20,14,17,14,20,26,27,22,28,18,34,28,22,18,25,30,147,62,55,38,48,30,28,35,42,26,22,18,15,14,12,12,14,18,20,25,22,18,30,28,22,24,16,14,12,12,18,10,8,6,5,5,4,5,4,6,5,4,5,4,5,4,5,4,4,5,4,3,4,4,5,3,4,3,
    2,3,2,2,2,4,2,4,4,8,7,24,24,15,8,14,17,12,8,8,8,8,8,8,8];

  const candles = [
    ...first.map(c => c.map((v, i) => i ? 1000 + v / 2.8 : v)),
    ...mid.map(c => c.map((v, i) => i ? v * 2.2857 : v)),
    ...last.map(c => c.map((v, i) => i ? 80 + v / 3 : v)),
  ];

  candles.forEach((c, i) => {
    const x = 471 + 16 * i;
    const [white, top, bot, hi, lo] = c;
    const h = Math.max(bot - top, 2);
    if (vols[i]) out += `<path d="M${x} 1518v-${vols[i]}" stroke="#22b822" stroke-width="2"/>`;
    out += `<path d="M${x} ${hi}V${lo}" stroke="#1aa51a" stroke-width="1.400"/>`;
    out += `<rect x="${x - 5}" y="${top}" width="10" height="${h}" fill="${white ? "#fff" : "#000"}" stroke="#22b822" stroke-width="1.500"/>`;
  });

  // frame
  out += `<path d="M472 1518V87.500H3489V1518H472" fill="none" stroke="#e8e8e8" stroke-width="1.500"/>`;
  out += `<rect x="470" y="1519" width="3114" height="33" fill="#000"/>`;

  // time axis
  const times = ["5 May 2026","5 May 20:30","5 May 23:30","6 May 01:30","6 May 03:30","6 May 05:30","6 May 07:30","6 May 09:30","6 May 11:30","6 May 13:30","6 May 15:30","6 May 17:30","6 May 19:30","6 May 22:30","7 May 00:30","7 May 02:30","7 May 04:30","7 May 06:30","7 May 08:30"];
  times.forEach((t, i) => {
    const x = i ? 599 + 128 * (i - 1) : 472;
    if (i) out += `<path d="M${x} 1518v6" stroke="#fff" stroke-width="1.500"/>`;
    out += `<text x="${x}" y="1541">${t}</text>`;
  });

  // order levels
  [225.5, 228.7, 309].forEach(y => {
    out += `<path d="M472 ${y}H3489" stroke="#3f9f3f" stroke-width="1.500" stroke-dasharray="3 3"/>`;
  });
  out += `<path d="M472 344H3489" stroke="#a8a8a8" stroke-width="1.500"/>`;
  out += `<path d="M472 1250 535 1200" stroke="#2060b0" stroke-width="1.500" stroke-dasharray="3 3"/>`;
  out += `<path d="M2791 308 2887 346M2663 175 2679 146" stroke="#e8502a" stroke-width="2" stroke-dasharray="3 3"/>`;
  out += `<text x="483" y="220">SELL 2 at 50059.4</text><text x="483" y="222">SELL 2 at 50058.0</text><text x="483" y="304">SELL 5 at 50001.9</text>`;
  out += `<text x="562" y="114" font-size="19">US30m, M15:\u00a0 US Wall Street 30 Index</text>`;

  // chart icons
  out += `<rect x="482" y="97" width="14" height="21" fill="#fbd9cf" stroke="#b8402a" stroke-width="2"/><rect x="496" y="97" width="14" height="21" fill="#bfe0f9" stroke="#0f5fa8" stroke-width="2"/><path d="M484 104h10M484 111h10" stroke="#b8402a" stroke-width="2"/><path d="M498 104h10M498 111h10" stroke="#0f5fa8" stroke-width="2"/>`;
  out += `<path d="M524 118V98h8l2 8v12zM553 98v20h-10v-12l2-8z" fill="#bfe0f9" stroke="#0f5fa8" stroke-width="2"/><path d="M524 118V98h8l2 8v12z" fill="#fbd9cf" stroke="#b8402a" stroke-width="2"/><rect x="531" y="95" width="9" height="9" fill="#ddd" stroke="#555" stroke-width="2"/>`;

  // deal arrows
  const arrow = (x, y, col, up) => {
    const d = up ? `M${x} ${y - 8}l9 10h-5v7h-8v-7h-5z` : `M${x} ${y + 8}l9 -10h-5v-7h-8v7h-5z`;
    return `<path d="${d}" fill="${col}" stroke="#fff" stroke-width="1.200"/>`;
  };
  out += arrow(535, 1196, "#e8502a", false) + arrow(2663, 169, "#e8502a", false) + arrow(2663, 181, "#e8502a", false);
  out += arrow(2679, 142, "#1464b4", true) + arrow(2759, 219, "#e8502a", false) + arrow(2791, 300, "#e8502a", false) + arrow(2887, 352, "#0f5fa8", true);
  out += `<path d="M2879 87h18l-9 10z" fill="#7c8a9a"/>`;

  // bid tag
  out += `<rect x="3491" y="333" width="78" height="23" fill="#6f7d8f"/><text x="3496" y="351" fill="#1c2430">49977.7</text>`;

  svg.innerHTML = out;
</script>
</body>
</html>
